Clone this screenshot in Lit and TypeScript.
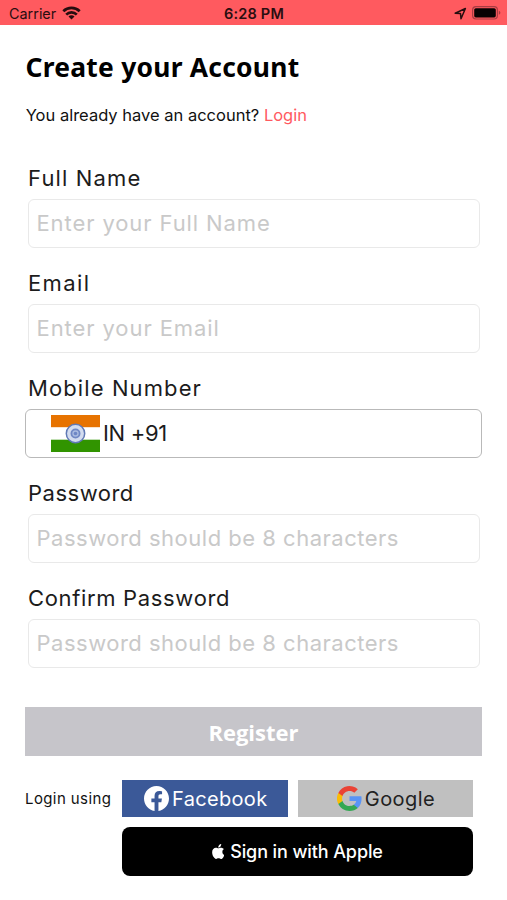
import { LitElement, html, css, svg } from "lit";
import { customElement, property } from "lit/decorators.js";

const wifi = svg`<svg width="19" height="14" viewBox="0 0 19 14" fill="none" stroke="#260d0f" stroke-width="2.7">
  <path d="M1.3 5.2a11.7 11.7 0 0 1 16.4 0"/><path d="M4.2 8.6a7.6 7.6 0 0 1 10.6 0"/>
  <path d="M9.5 13.6 6.5 10.6a4.2 4.2 0 0 1 6 0z" fill="#260d0f" stroke="none"/></svg>`;

const locationArrow = svg`<svg width="13" height="13" viewBox="0 0 13 13"><path d="M1.2 6.2 11.4 1.5 7 11.8 6.5 6.6z" fill="none" stroke="#260d0f" stroke-width="1.5" stroke-linejoin="round"/></svg>`;

const battery = svg`<svg width="29" height="14" viewBox="0 0 29 14"><rect x=".6" y=".6" width="24.8" height="12.4" rx="3.4" fill="none" stroke="#a83c42" stroke-width="1.2"/>
  <rect x="2.2" y="2.2" width="21.6" height="9.2" rx="1.6" fill="#080203"/><path d="M26.8 4.8q1.6.7 1.6 2t-1.6 2z" fill="#a83c42"/></svg>`;

const flag = svg`<svg width="49" height="37" viewBox="0 0 49 37"><rect width="49" height="37" fill="#fff"/><rect width="49" height="12.2" fill="#e77300"/><rect y="24.7" width="49" height="12.3" fill="#319400"/>
  <circle cx="24.5" cy="18.5" r="9.2" fill="#d3dcef" stroke="#6079b5" stroke-width="1.5"/>
  <circle cx="24.5" cy="18.5" r="4.1" fill="#a9bae0" stroke="#7088c4" stroke-width="1.8"/><circle cx="24.5" cy="18.5" r="1.8" fill="#6d86c4"/></svg>`;

const facebook = svg`<svg width="25" height="25" viewBox="0 0 24 24"><path fill="#fff" d="M24 12.07C24 5.4 18.63 0 12 0S0 5.4 0 12.07C0 18.1 4.39 23.1 10.13 24v-8.44H7.08v-3.49h3.05V9.41c0-3.02 1.79-4.69 4.53-4.69 1.31 0 2.68.24 2.68.24v2.97h-1.51c-1.49 0-1.96.93-1.96 1.89v2.25h3.33l-.53 3.49h-2.8V24C19.61 23.1 24 18.1 24 12.07z"/></svg>`;

const google = svg`<svg width="25" height="25" viewBox="0 0 24 24"><path fill="#5a94f5" d="M23.6 12.27c0-.85-.08-1.67-.22-2.45H12v4.64h6.5a5.56 5.56 0 0 1-2.41 3.65v3.03h3.9c2.28-2.1 3.61-5.2 3.61-8.87z"/>
  <path fill="#34a853" d="M12 24c3.24 0 5.96-1.07 7.95-2.91l-3.88-3c-1.08.72-2.45 1.16-4.07 1.16-3.13 0-5.78-2.11-6.73-4.96h-4v3.09A12 12 0 0 0 12 24z"/>
  <path fill="#fbbc05" d="M5.27 14.29a7.2 7.2 0 0 1 0-4.58V6.62h-4a12 12 0 0 0 0 10.76z"/>
  <path fill="#ea4335" d="M12 4.75c1.77 0 3.35.61 4.6 1.8l3.42-3.42A11.97 11.97 0 0 0 1.27 6.62l4 3.09C6.22 6.86 8.87 4.75 12 4.75z"/></svg>`;

const apple = svg`<svg width="12.5" height="15" viewBox="0 0 814 1000"><path fill="#fff" d="M788 341c-6 4-108 62-108 190 0 148 130 200 134 202-1 3-21 72-69 142-43 61-87 123-155 123s-86-40-164-40c-77 0-104 41-166 41s-106-57-156-127C46 790 0 663 0 542c0-194 126-297 251-297 66 0 121 43 163 43 39 0 101-46 176-46 29 0 131 3 198 99zM554 159c31-37 53-88 53-139 0-7-1-14-2-20-51 2-111 34-147 76-28 32-55 83-55 135 0 8 1 16 2 18 3 1 8 1 14 1 45 0 102-30 135-71z"/></svg>`;

@customElement("form-field")
class FormField extends LitElement {
  @property() label = "";
  @property() hint = "";
  @property({ type: Number }) labelSpacing = 0.5;
  @property({ type: Number }) hintSpacing = 0.5;
  @property({ type: Boolean }) phone = false;

  static styles = css`
    :host { display: block; height: 105.1px; }
    .label { height: 37px; padding-left: 3px; line-height: 32px; font-size: 22px; color: #1c1c1c; white-space: nowrap; }
    .box { box-sizing: border-box; height: 49px; margin: 0 2.5px; border: 1px solid #e9e9e9; border-radius: 6px; padding-left: 8px; display: flex; align-items: center; font-size: 22px; color: #c9c9c9; white-space: nowrap; }
    .box.phone { margin: 0; border: 1.5px solid #b9b9b9; padding-left: 25px; gap: 3px; color: #1c1c1c; }
    svg { display: block; }
  `;

  render() {
    return html`<div class="label" style="letter-spacing:${this.labelSpacing}px">${this.label}</div>
      <div class="box ${this.phone ? "phone" : ""}">${this.phone ? flag : ""}<span style="letter-spacing:${this.hintSpacing}px">${this.hint}</span></div>`;
  }
}

@customElement("app-root")
class AppRoot extends LitElement {
  static styles = css`
    :host { display: block; height: 900px; background: #fff; font-family: Inter, "Liberation Sans", sans-serif; color: #111; overflow: hidden; }
    svg { display: block; flex: none; }
    .status { height: 25px; background: #ff5a5f; color: #2a0e10; display: grid; grid-template-columns: 1fr auto 1fr; align-items: center; padding: 1px 6px 0 9px; box-sizing: border-box; font-size: 14.4px; }
    .left { display: flex; align-items: center; gap: 5.5px; }
    .left svg { margin-top: -1px; }
    .right { display: flex; align-items: center; justify-content: flex-end; gap: 5px; }
    .time { font-weight: 600; font-size: 14.5px; letter-spacing: 0.2px; margin-right: 2px; }
    main { padding: 0 25px; }
    h1 { margin: 0; padding: 22px 0 0 0.5px; height: 40px; font: 700 26.4px/40px "Noto Sans", sans-serif; letter-spacing: 0.26px; color: #000; white-space: nowrap; }
    .sub { height: 24px; margin-top: 16px; padding-left: 0.7px; line-height: 24px; font-size: 16.5px; white-space: nowrap; }
    .link { color: #ff5a5f; }
    .fields { padding-top: 34.5px; }
    .register { height: 49px; margin-top: 20.2px; background: #c6c5ca; color: #fff; font: 700 22px/50px "Open Sans", sans-serif; text-align: center; }
    .social { display: grid; grid-template-columns: 87.5px 166px 175px; column-gap: 9.5px; margin-top: 24px; align-items: center; }
    .using { font-size: 15px; letter-spacing: 0.4px; white-space: nowrap; }
    .btn { box-sizing: border-box; height: 37px; padding-left: 1.5px; display: flex; align-items: center; justify-content: center; gap: 3px; font-size: 20px; letter-spacing: 0.32px; }
    .fb { background: #3b5998; color: #fff; }
    .gg { background: #c0c0c0; color: #222; padding-left: 2px; letter-spacing: 0.45px; }
    .apple { margin: 9.5px 9.5px 0 97px; height: 49px; border-radius: 8px; background: #000; color: #fff; display: flex; align-items: center; justify-content: center; gap: 6px; font-size: 18px; letter-spacing: -0.1px; font-weight: 500; }
  `;

  render() {
    return html`
      <div class="status">
        <div class="left"><span>Carrier</span>${wifi}</div>
        <div class="time">6:28 PM</div>
        <div class="right">${locationArrow}${battery}</div>
      </div>
      <main>
        <h1>Create your Account</h1>
        <div class="sub">You already have an account? <span class="link">Login</span></div>
        <div class="fields">
          <form-field label="Full Name" .labelSpacing=${1.15} hint="Enter your Full Name" .hintSpacing=${0.9}></form-field>
          <form-field label="Email" .labelSpacing=${1.4} hint="Enter your Email" .hintSpacing=${0.92}></form-field>
          <form-field label="Mobile Number" .labelSpacing=${1.1} hint="IN +91" .hintSpacing=${-0.3} phone></form-field>
          <form-field label="Password" hint="Password should be 8 characters"></form-field>
          <form-field label="Confirm Password" .labelSpacing=${0.66} hint="Password should be 8 characters"></form-field>
        </div>
        <div class="register">Register</div>
        <div class="social">
          <span class="using">Login using</span>
          <div class="btn fb">${facebook}<span>Facebook</span></div>
          <div class="btn gg">${google}<span>Google</span></div>
        </div>
        <div class="apple">${apple}<span>Sign in with Apple</span></div>
      </main>
    `;
  }
}
